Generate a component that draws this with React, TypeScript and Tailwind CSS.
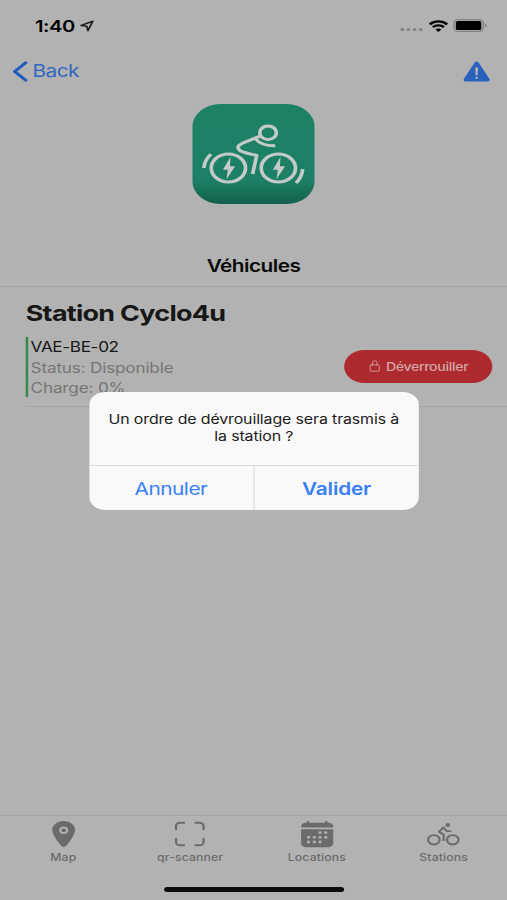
import React from 'react';
import { IoCalendar, IoLocation, IoLockClosedOutline, IoScanOutline, IoWarning } from 'react-icons/io5';

const BikeIcon = ({ className }: { className?: string }) => (
  <svg className={className} viewBox="0 0 30 30" fill="none" stroke="currentColor" strokeWidth="1.8" strokeLinecap="round" strokeLinejoin="round">
    <circle cx="7.3" cy="20.8" r="4.7" />
    <circle cx="22.7" cy="20.8" r="4.7" />
    <circle cx="18.7" cy="5.9" r="2" fill="currentColor" stroke="none" />
    <path d="M20.8 12.2 H17.8 L15.1 8.4 L11.4 12.8 L15.3 15.8 V21.2" />
  </svg>
);

const tabs = [
  { icon: IoLocation, label: 'Map' },
  { icon: IoScanOutline, label: 'qr-scanner' },
  { icon: IoCalendar, label: 'Locations' },
  { icon: BikeIcon, label: 'Stations' },
];

const StatusBar = () => (
  <div className="flex h-[52px] items-center justify-between pl-[28.5px] pr-[16px] text-black">
    <div className="flex items-center">
      <span className="text-[16.5px] font-semibold leading-none tracking-[-0.4px]">1:40</span>
      <svg className="ml-[4px] h-3 w-3" viewBox="0 0 12 12" fill="none" stroke="#202020" strokeWidth="1.5" strokeLinejoin="round">
        <path d="M10.8 1.3 L6.8 10.6 L5.9 6.2 L1.2 5.4 Z" />
      </svg>
    </div>
    <div className="flex items-center">
      <div className="mt-[7px] flex gap-[2px]">
        <span className="h-[3px] w-[3px] rounded-full bg-[#828282]" />
        <span className="h-[3px] w-[3px] rounded-full bg-[#828282]" />
        <span className="h-[3px] w-[3px] rounded-full bg-[#828282]" />
        <span className="h-[3px] w-[3px] rounded-full bg-[#828282]" />
      </div>
      <svg className="-mt-px ml-[5px] h-3 w-4" viewBox="0 0 16 12" fill="none" stroke="#000" strokeWidth="2.3">
        <path d="M0.9 4.3 a10.2 10.2 0 0 1 14.2 0" />
        <path d="M3.5 7.2 a6.5 6.5 0 0 1 9 0" />
        <path d="M8 12 L5.6 9.6 a3.5 3.5 0 0 1 4.8 0 Z" fill="#000" stroke="none" />
      </svg>
      <svg className="-mt-px ml-[4px] h-[13px] w-[28px]" viewBox="0 0 28 13">
        <rect x="0.6" y="0.6" width="24" height="11.8" rx="3.4" fill="none" stroke="#848484" strokeWidth="1.2" />
        <rect x="2.2" y="2" width="20.8" height="9" rx="1.6" fill="#000" />
        <path d="M26 4.4 a2.3 2.3 0 0 1 0 4.2 Z" fill="#7d7d7d" />
      </svg>
    </div>
  </div>
);

const Logo = () => (
  <svg className="h-[100px] w-[100px]" viewBox="0 0 100 100" fill="none">
    <defs>
      <linearGradient id="logo-bg" x1="0" y1="0" x2="0" y2="1">
        <stop offset="0" stopColor="#1d8166" />
        <stop offset="0.76" stopColor="#1d8066" />
        <stop offset="1" stopColor="#12604b" />
      </linearGradient>
    </defs>
    <rect width="100" height="100" rx="23" fill="url(#logo-bg)" />
    <g stroke="#c3cac8" strokeWidth="3">
      <circle cx="29.5" cy="64" r="14" />
      <circle cx="70.3" cy="64" r="14" />
      <circle cx="61.9" cy="28.7" r="6.8" />
      <path d="M55.5 32 L41 39.2 Q34.5 43 39.5 47 Q41.5 48.4 52.6 51.4 L49.3 70" strokeLinejoin="round" />
      <path d="M51.5 34.5 Q56 42 67.8 41.8" />
      <path d="M15.3 50.3 Q10.3 55.5 9.4 64" />
      <path d="M90.2 65 Q89.4 73.5 84.7 79" />
    </g>
    <g fill="#c3cac8">
      <path d="M31.2 53 L25 65.7 H29 L28 75.2 L35 62.3 H30.8 Z" />
      <path d="M72 53 L65.8 65.7 H69.8 L68.8 75.2 L75.8 62.3 H71.6 Z" />
    </g>
  </svg>
);

const AlertDialog = () => (
  <div className="absolute left-[72.5px] top-[391.5px] flex h-[118.5px] w-[269.5px] flex-col overflow-hidden rounded-[13px] bg-[#f9f9f9]">
    <p className="flex-1 px-3 pt-[19px] text-center text-[13px] leading-[17px] tracking-[-0.1px] text-[#1c1c1c]">
      Un ordre de dévrouillage sera trasmis à<br />
      la station ?
    </p>
    <div className="flex h-[45px] border-t border-[#dbdbdb] text-[17px] text-[#3880f6]">
      <button className="flex-1 border-r border-[#dbdbdb] pt-[3px] tracking-[-0.4px]">Annuler</button>
      <button className="flex-1 pt-[3px] font-semibold tracking-[-0.15px]">Valider</button>
    </div>
  </div>
);

const App = () => {
  return (
    <div className="h-[900px] w-[507px] overflow-hidden">
      {/* 414pt wide screen spread over the full width */}
      <div className="relative flex h-[900px] w-[414px] origin-top-left scale-x-[1.22464] flex-col bg-[#b2b2b2] font-['Inter',sans-serif]">
        <StatusBar />

        {/* Header */}
        <header className="flex h-[38px] items-center justify-between pl-[10px] pr-[11.5px] text-[#2f68bf]">
          <button className="flex items-center text-[17px]">
            <svg className="h-[21px] w-[13px]" viewBox="0 0 13 21" fill="none" stroke="#1f5bbd" strokeWidth="2.7" strokeLinecap="round" strokeLinejoin="round">
              <path d="M11 1.8 L2 10.5 L11 19.2" />
            </svg>
            <span className="ml-[3.5px] mt-[1px] tracking-[-0.45px]">Back</span>
          </button>
          <IoWarning className="h-[27px] w-[27px] text-[#2962bd]" />
        </header>

        <div className="flex h-[197px] flex-col items-center border-b border-[#a1a1a1] pt-[13.5px]">
          <Logo />
          <h1 className="mt-[50px] text-[17px] font-semibold leading-6 tracking-[-0.45px] text-[#0a0a0a]">Véhicules</h1>
        </div>

        {/* Vehicle list */}
        <main className="flex-1 pl-[20.5px]">
          <h2 className="pl-[0.5px] pt-[12px] text-[22px] font-bold leading-[28px] tracking-[-0.6px] text-[#171717]">Station Cyclo4u</h2>
          <div className="flex h-[80px] items-start justify-between border-b border-[#a1a1a1] pr-[12px] pt-[10px]">
            <div className="h-[60px] border-l-2 border-[#2f8a4c] pl-[2.5px] text-[14px] leading-5 tracking-[-0.15px] text-[#757575]">
              <h3 className="tracking-[-0.3px] text-[#171717]">VAE-BE-02</h3>
              <p className="mt-[1px]">Status: Disponible</p>
              <p>Charge: 0%</p>
            </div>
            <button className="mt-[13px] flex h-[33px] w-[121.5px] items-center justify-center gap-[3px] rounded-full bg-[#ad2b2e] text-[11.5px] font-medium tracking-[-0.25px] text-[#d4a5a6]">
              <IoLockClosedOutline className="-mt-[2px] h-[12px] w-[12px]" />
              <span className="mt-[2px]">Déverrouiller</span>
            </button>
          </div>
        </main>

        {/* Tab bar */}
        <nav className="flex h-[85.5px] border-t border-[#a3a3a3] text-[#6b6b6b]">
          {tabs.map((tab) => (
            <div key={tab.label} className="flex flex-1 flex-col items-center pt-[3px]">
              <tab.icon className="h-[30px] w-[30px]" />
              <span className="mt-[2.5px] text-[10px] font-medium leading-3 tracking-[0.1px]">{tab.label}</span>
            </div>
          ))}
        </nav>

        <AlertDialog />
        <div className="absolute bottom-[8px] left-[133.5px] h-[5px] w-[147.5px] rounded-full bg-[#0c0c0c]" />
      </div>
    </div>
  );
};

export default App;
